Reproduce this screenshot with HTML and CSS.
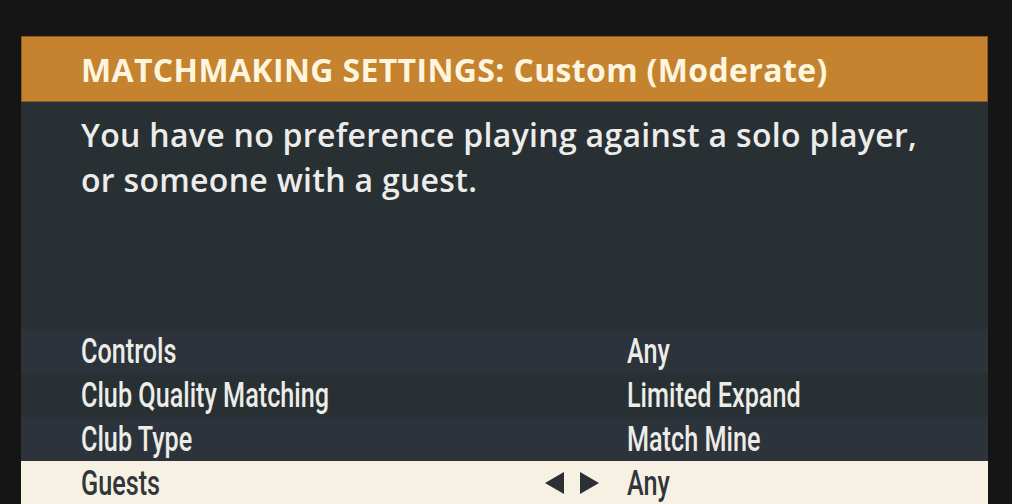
FILE: index.html
```html
<!DOCTYPE html>
<html lang="en">
<head>
    <meta charset="UTF-8">
    <title>Matchmaking Settings</title>
    <link rel="stylesheet" href="styles.css">
</head>
<body>
    <section class="panel">
        <header class="panel-header">
            <h1>MATCHMAKING SETTINGS: Custom (Moderate)</h1>
        </header>

        <div class="panel-desc">
            <p>You have no preference playing against a solo player,<br>or someone with a guest.</p>
        </div>

        <ul class="settings-list">
            <li class="setting-row">
                <span class="setting-label"><span class="cond">Controls</span></span>
                <span class="setting-value"><span class="cond">Any</span></span>
            </li>
            <li class="setting-row">
                <span class="setting-label"><span class="cond">Club Quality Matching</span></span>
                <span class="setting-value"><span class="cond">Limited Expand</span></span>
            </li>
            <li class="setting-row">
                <span class="setting-label"><span class="cond">Club Type</span></span>
                <span class="setting-value"><span class="cond">Match Mine</span></span>
            </li>
            <li class="setting-row selected">
                <span class="setting-label"><span class="cond">Guests</span></span>
                <span class="setting-arrows">
                    <svg width="19" height="22" viewBox="0 0 19 22"><polygon points="19,0 19,22 0,11" /></svg>
                    <svg width="19" height="22" viewBox="0 0 19 22"><polygon points="0,0 0,22 19,11" /></svg>
                </span>
                <span class="setting-value"><span class="cond">Any</span></span>
            </li>
        </ul>
    </section>
</body>
</html>
```

FILE: styles.css
```css
body { margin: 0; padding: 0; background-color: #151515; height: 504px; overflow: hidden; font-family: 'Open Sans', 'DejaVu Sans', sans-serif; }

.panel { margin: 36px 0 0 21px; width: 967px; background-color: #283033; }

.panel-header { height: 64px; display: flex; align-items: center; padding: 0 0 0 59px; background-color: #c5832f; border: 1px solid #8c5a1e; }
.panel-header h1 { margin: 0; font-size: 32px; font-weight: 700; color: #fdf5de; letter-spacing: 0.35px; }

.panel-desc { height: 227px; box-sizing: border-box; padding: 10px 60px 0; }
.panel-desc p { margin: 0; font-size: 32px; font-weight: 600; line-height: 45px; color: #ececea; letter-spacing: 0.3px; }

.settings-list { list-style: none; margin: 0; padding: 0; }
.setting-row { height: 44px; display: flex; align-items: center; padding-left: 60px; font-family: 'Roboto', 'Liberation Sans', sans-serif; font-size: 35px; font-weight: 500; color: #ecece8; background-color: #283033; white-space: nowrap; }
.setting-row:nth-child(odd) { background-color: #2d333a; }
.setting-row.selected { background-color: #f6f1e2; color: #30363a; }

/* squeeze the text to look like the condensed game font */
.cond { display: inline-block; transform: scaleX(0.72); transform-origin: left center; }

.setting-label { width: 546px; }
.setting-row.selected .setting-label { width: 464px; }
.setting-arrows { display: flex; gap: 16px; width: 82px; }
.setting-arrows svg { fill: #2a3034; }
```
